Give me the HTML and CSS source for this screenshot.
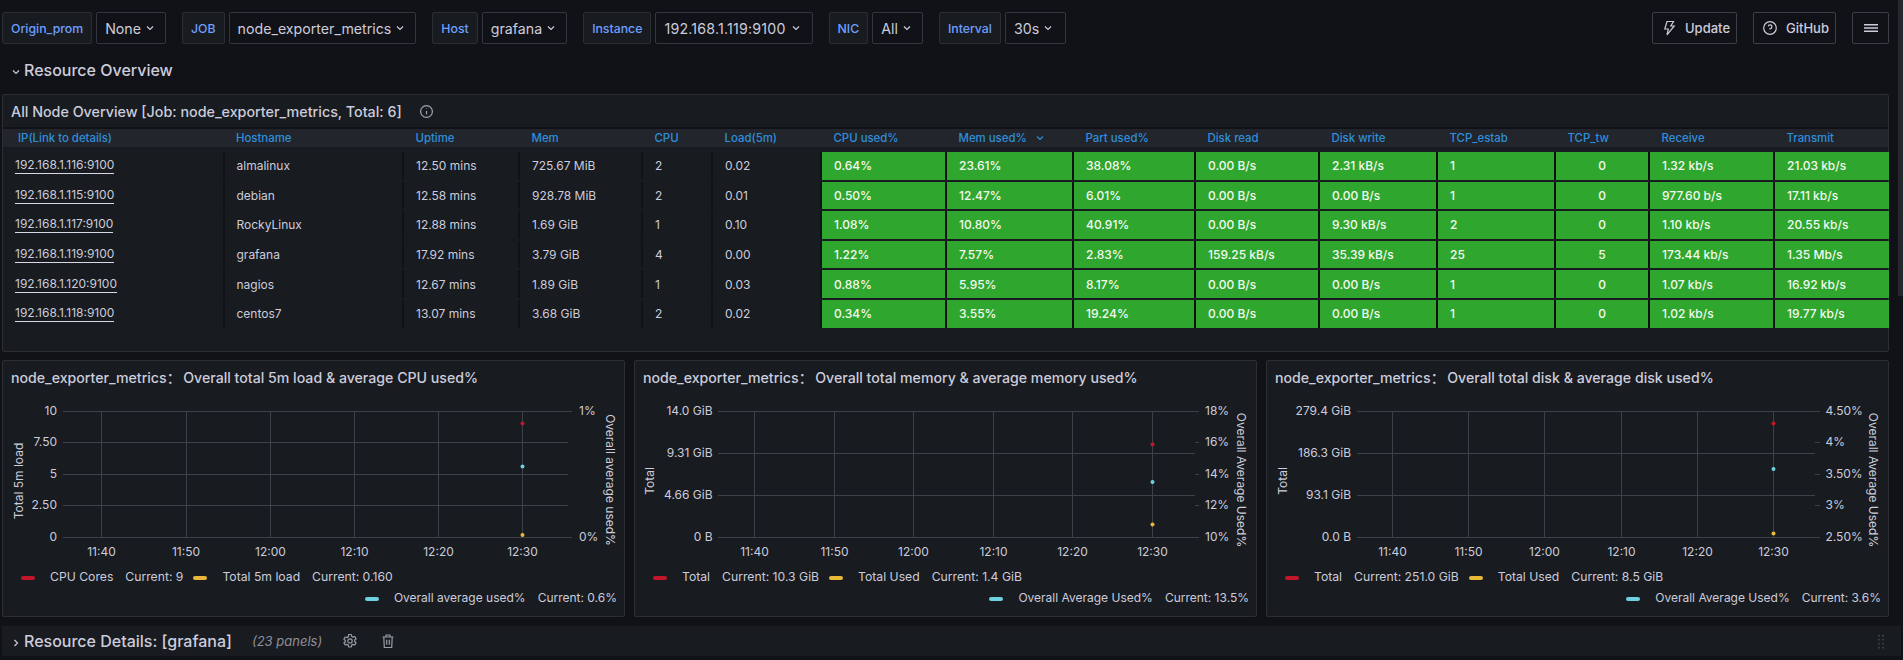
FILE: index.html
```html
<!DOCTYPE html>
<html lang="en">
<head>
<meta charset="utf-8">
<title>Node Exporter Dashboard</title>
<link rel="stylesheet" href="styles.css">
</head>
<body>
<div class="scroll-thumb"></div>
<main class="page">
  <header class="toolbar">
    <div class="var"><span class="var-label">Origin_prom</span><span class="var-select">None<svg class="chev" viewBox="0 0 8 6"><path d="M1 1.5l3 3 3-3"/></svg></span></div>
    <div class="var"><span class="var-label">JOB</span><span class="var-select">node_exporter_metrics<svg class="chev" viewBox="0 0 8 6"><path d="M1 1.5l3 3 3-3"/></svg></span></div>
    <div class="var"><span class="var-label">Host</span><span class="var-select">grafana<svg class="chev" viewBox="0 0 8 6"><path d="M1 1.5l3 3 3-3"/></svg></span></div>
    <div class="var"><span class="var-label">Instance</span><span class="var-select spaced">192.168.1.119:9100<svg class="chev" viewBox="0 0 8 6"><path d="M1 1.5l3 3 3-3"/></svg></span></div>
    <div class="var"><span class="var-label">NIC</span><span class="var-select">All<svg class="chev" viewBox="0 0 8 6"><path d="M1 1.5l3 3 3-3"/></svg></span></div>
    <div class="var"><span class="var-label">Interval</span><span class="var-select roomy">30s<svg class="chev" viewBox="0 0 8 6"><path d="M1 1.5l3 3 3-3"/></svg></span></div>
    <div class="actions">
      <span class="btn btn-update"><svg class="btn-icon" viewBox="0 0 16 16"><path d="M6 1.500h6.500L9.800 6h3.400L6 14.800 7.300 9H3.800z"/></svg>Update</span>
      <span class="btn btn-github"><svg class="btn-icon" viewBox="0 0 16 16"><circle cx="8" cy="8" r="6.300"/><path d="M6.200 6.300A1.900 1.900 0 1 1 8 8.600v.8"/><path d="M8 11.200v.4"/></svg>GitHub</span>
      <span class="btn btn-menu"><svg class="btn-icon wide" viewBox="0 0 16 16"><path d="M1 4.700h14M1 8h14M1 11.300h14"/></svg></span>
    </div>
  </header>

  <div class="section-head"><svg class="chev section-chev" viewBox="0 0 8 6"><path d="M1 1.500l3 3 3-3"/></svg><span>Resource Overview</span></div>

  <section class="panel table-panel">
    <div class="panel-title">All Node Overview [Job: node_exporter_metrics, Total: 6]<svg class="info" viewBox="0 0 16 16"><circle cx="8" cy="8" r="6.300"/><path d="M8 7.400v3.600"/><path d="M8 4.800v.5"/></svg></div>
    <div class="cols thead">
      <span>IP(Link to details)</span><span>Hostname</span><span>Uptime</span><span>Mem</span><span>CPU</span><span>Load(5m)</span><span>CPU used%</span><span>Mem used%<svg class="chev sort" viewBox="0 0 8 6"><path d="M1 1.500l3 3 3-3"/></svg></span><span>Part used%</span><span>Disk read</span><span>Disk write</span><span>TCP_estab</span><span>TCP_tw</span><span>Receive</span><span>Transmit</span>
    </div>
    <div class="tbody">
      <div class="cols trow"><span class="c"><a class="ip">192.168.1.116:9100</a></span><span class="c">almalinux</span><span class="c">12.50 mins</span><span class="c">725.67 MiB</span><span class="c">2</span><span class="c">0.02</span><span class="g">0.64%</span><span class="g">23.61%</span><span class="g">38.08%</span><span class="g">0.00 B/s</span><span class="g">2.31 kB/s</span><span class="g">1</span><span class="g ctr">0</span><span class="g">1.32 kb/s</span><span class="g">21.03 kb/s</span></div>
      <div class="cols trow"><span class="c"><a class="ip">192.168.1.115:9100</a></span><span class="c">debian</span><span class="c">12.58 mins</span><span class="c">928.78 MiB</span><span class="c">2</span><span class="c">0.01</span><span class="g">0.50%</span><span class="g">12.47%</span><span class="g">6.01%</span><span class="g">0.00 B/s</span><span class="g">0.00 B/s</span><span class="g">1</span><span class="g ctr">0</span><span class="g">977.60 b/s</span><span class="g">17.11 kb/s</span></div>
      <div class="cols trow"><span class="c"><a class="ip">192.168.1.117:9100</a></span><span class="c">RockyLinux</span><span class="c">12.88 mins</span><span class="c">1.69 GiB</span><span class="c">1</span><span class="c">0.10</span><span class="g">1.08%</span><span class="g">10.80%</span><span class="g">40.91%</span><span class="g">0.00 B/s</span><span class="g">9.30 kB/s</span><span class="g">2</span><span class="g ctr">0</span><span class="g">1.10 kb/s</span><span class="g">20.55 kb/s</span></div>
      <div class="cols trow"><span class="c"><a class="ip">192.168.1.119:9100</a></span><span class="c">grafana</span><span class="c">17.92 mins</span><span class="c">3.79 GiB</span><span class="c">4</span><span class="c">0.00</span><span class="g">1.22%</span><span class="g">7.57%</span><span class="g">2.83%</span><span class="g">159.25 kB/s</span><span class="g">35.39 kB/s</span><span class="g">25</span><span class="g ctr">5</span><span class="g">173.44 kb/s</span><span class="g">1.35 Mb/s</span></div>
      <div class="cols trow"><span class="c"><a class="ip">192.168.1.120:9100</a></span><span class="c">nagios</span><span class="c">12.67 mins</span><span class="c">1.89 GiB</span><span class="c">1</span><span class="c">0.03</span><span class="g">0.88%</span><span class="g">5.95%</span><span class="g">8.17%</span><span class="g">0.00 B/s</span><span class="g">0.00 B/s</span><span class="g">1</span><span class="g ctr">0</span><span class="g">1.07 kb/s</span><span class="g">16.92 kb/s</span></div>
      <div class="cols trow"><span class="c"><a class="ip">192.168.1.118:9100</a></span><span class="c">centos7</span><span class="c">13.07 mins</span><span class="c">3.68 GiB</span><span class="c">2</span><span class="c">0.02</span><span class="g">0.34%</span><span class="g">3.55%</span><span class="g">19.24%</span><span class="g">0.00 B/s</span><span class="g">0.00 B/s</span><span class="g">1</span><span class="g ctr">0</span><span class="g">1.02 kb/s</span><span class="g">19.77 kb/s</span></div>
    </div>
  </section>

  <div class="charts">
    <section class="panel chart-panel">
      <div class="panel-title chart-title">node_exporter_metrics：&#8201;Overall total 5m load &amp; average CPU used%</div>
      <svg class="chart" viewBox="3 395 621 171">
        <g class="grid">
          <path d="M63 411.500H572M63 442.500H568M63 474.500H568M63 505.500H568M63 537.500H572"/>
          <path d="M101.500 411V537M186.500 411V537M270.500 411V537M354.500 411V537M438.500 411V537M522.500 411V537"/>
        </g>
        <g class="axis end"><text x="57" y="415">10</text><text x="57" y="446">7.50</text><text x="57" y="478">5</text><text x="57" y="509">2.50</text><text x="57" y="541">0</text></g>
        <g class="axis"><text x="579" y="415">1%</text><text x="579" y="541">0%</text></g>
        <g class="axis mid"><text x="101.500" y="556">11:40</text><text x="186" y="556">11:50</text><text x="270.500" y="556">12:00</text><text x="354.500" y="556">12:10</text><text x="438.500" y="556">12:20</text><text x="522.500" y="556">12:30</text></g>
        <text class="axis-title" transform="translate(23 481) rotate(-90)">Total 5m load</text>
        <text class="axis-title" transform="translate(606 480) rotate(90)">Overall average used%</text>
        <circle class="red" cx="522.500" cy="423.500" r="2"/><circle class="cyan" cx="522.500" cy="466.500" r="2"/><circle class="yellow" cx="522.500" cy="535" r="2"/>
      </svg>
      <div class="legend">
        <div class="legend-row">
          <span class="lg"><i class="sw sw-red"></i><span>CPU Cores</span><span>Current: 9</span></span>
          <span class="lg"><i class="sw sw-yellow"></i><span>Total 5m load</span><span>Current: 0.160</span></span>
        </div>
        <div class="legend-row right">
          <span class="lg"><i class="sw sw-cyan"></i><span>Overall average used%</span><span>Current: 0.6%</span></span>
        </div>
      </div>
    </section>

    <section class="panel chart-panel">
      <div class="panel-title chart-title">node_exporter_metrics：&#8201;Overall total memory &amp; average memory used%</div>
      <svg class="chart" viewBox="635 395 621 171">
        <g class="grid">
          <path d="M718 411.500H1199M718 453.500H1195M718 495.500H1195M718 537.500H1199M1195 442.500H1199M1195 474.500H1199M1195 505.500H1199"/>
          <path d="M754.500 411V537M834.500 411V537M913.500 411V537M993.500 411V537M1072.500 411V537M1152.500 411V537"/>
        </g>
        <g class="axis end"><text x="712.500" y="415">14.0 GiB</text><text x="712.500" y="457">9.31 GiB</text><text x="712.500" y="499">4.66 GiB</text><text x="712.500" y="541">0 B</text></g>
        <g class="axis"><text x="1205" y="415">18%</text><text x="1205" y="446">16%</text><text x="1205" y="478">14%</text><text x="1205" y="509">12%</text><text x="1205" y="541">10%</text></g>
        <g class="axis mid"><text x="754.500" y="556">11:40</text><text x="834.500" y="556">11:50</text><text x="913.500" y="556">12:00</text><text x="993.500" y="556">12:10</text><text x="1072.500" y="556">12:20</text><text x="1152.500" y="556">12:30</text></g>
        <text class="axis-title" transform="translate(654 481) rotate(-90)">Total</text>
        <text class="axis-title" transform="translate(1237 480) rotate(90)">Overall Average Used%</text>
        <circle class="red" cx="1152.500" cy="444.500" r="2"/><circle class="cyan" cx="1152.500" cy="482" r="2"/><circle class="yellow" cx="1152.500" cy="524.500" r="2"/>
      </svg>
      <div class="legend">
        <div class="legend-row">
          <span class="lg"><i class="sw sw-red"></i><span>Total</span><span>Current: 10.3 GiB</span></span>
          <span class="lg"><i class="sw sw-yellow"></i><span>Total Used</span><span>Current: 1.4 GiB</span></span>
        </div>
        <div class="legend-row right">
          <span class="lg"><i class="sw sw-cyan"></i><span>Overall Average Used%</span><span>Current: 13.5%</span></span>
        </div>
      </div>
    </section>

    <section class="panel chart-panel">
      <div class="panel-title chart-title">node_exporter_metrics：&#8201;Overall total disk &amp; average disk used%</div>
      <svg class="chart" viewBox="1267 395 621 171">
        <g class="grid">
          <path d="M1357 411.500H1820M1357 453.500H1815M1357 495.500H1815M1357 537.500H1820M1815 442.500H1820M1815 474.500H1820M1815 505.500H1820"/>
          <path d="M1392.500 411V537M1468.500 411V537M1544.500 411V537M1621.500 411V537M1697.500 411V537M1773.500 411V537"/>
        </g>
        <g class="axis end"><text x="1351" y="415">279.4 GiB</text><text x="1351" y="457">186.3 GiB</text><text x="1351" y="499">93.1 GiB</text><text x="1351" y="541">0.0 B</text></g>
        <g class="axis"><text x="1825.500" y="415">4.50%</text><text x="1825.500" y="446">4%</text><text x="1825.500" y="478">3.50%</text><text x="1825.500" y="509">3%</text><text x="1825.500" y="541">2.50%</text></g>
        <g class="axis mid"><text x="1392.500" y="556">11:40</text><text x="1468.500" y="556">11:50</text><text x="1544.500" y="556">12:00</text><text x="1621.500" y="556">12:10</text><text x="1697.500" y="556">12:20</text><text x="1773.500" y="556">12:30</text></g>
        <text class="axis-title" transform="translate(1287 481) rotate(-90)">Total</text>
        <text class="axis-title" transform="translate(1869 480) rotate(90)">Overall Average Used%</text>
        <circle class="red" cx="1773.500" cy="423.500" r="2"/><circle class="cyan" cx="1773.500" cy="469" r="2"/><circle class="yellow" cx="1773.500" cy="533.500" r="2"/>
      </svg>
      <div class="legend">
        <div class="legend-row">
          <span class="lg"><i class="sw sw-red"></i><span>Total</span><span>Current: 251.0 GiB</span></span>
          <span class="lg"><i class="sw sw-yellow"></i><span>Total Used</span><span>Current: 8.5 GiB</span></span>
        </div>
        <div class="legend-row right">
          <span class="lg"><i class="sw sw-cyan"></i><span>Overall Average Used%</span><span>Current: 3.6%</span></span>
        </div>
      </div>
    </section>
  </div>

  <div class="row-bar">
    <svg class="chev-right" viewBox="0 0 6 8"><path d="M1.500 1l3 3-3 3"/></svg>
    <span class="row-title">Resource Details: [grafana]</span>
    <em class="row-count">(23 panels)</em>
    <svg class="row-icon gear" viewBox="0 0 16 16"><circle cx="8" cy="8" r="2.200"/><path d="M6.700 1.500h2.600l.4 1.900 1.300.7 1.800-.6 1.300 2.200-1.400 1.300v1.500l1.400 1.300-1.300 2.200-1.800-.6-1.300.7-.4 1.900H6.700l-.4-1.900-1.300-.7-1.800.6-1.300-2.200L3.300 9V7.500L1.900 6.200l1.300-2.200 1.800.6 1.300-.7z"/></svg>
    <svg class="row-icon trash" viewBox="0 0 16 16"><path d="M2.500 4h11M6 4V2h4v2M3.800 4l.5 10.500h7.400l.5-10.500M6.700 6.800v5M9.300 6.800v5"/></svg>
    <svg class="grip" viewBox="0 0 8 20"><path d="M0 1h2.500v2.500H0zM5.500 1H8v2.500H5.500zM0 6.300h2.500v2.500H0zM5.500 6.300H8v2.500H5.500zM0 11.600h2.500v2.500H0zM5.500 11.600H8v2.500H5.500zM0 16.900h2.500v2.500H0zM5.500 16.900H8v2.500H5.500z"/></svg>
  </div>
</main>
</body>
</html>
```

FILE: styles.css
```css
* { box-sizing: border-box; }
html, body { margin: 0; height: 660px; overflow: hidden; }
body {
  background: #111217;
  color: #ccccdc;
  font-family: Inter, "Noto Sans CJK SC", "Noto Sans", sans-serif;
  font-size: 12px;
}
.scroll-thumb {
  position: absolute;
  top: 0;
  right: 0;
  width: 5px;
  height: 296px;
  background: #26282d;
}
.page { width: 1889px; padding: 12px 0 0 2px; }

/* toolbar */
.toolbar { display: flex; gap: 16px; height: 32px; }
.var { display: flex; gap: 4px; }
.var-label {
  display: flex;
  align-items: center;
  height: 32px;
  padding: 0 8px;
  background: #181b1f;
  border: 1px solid #2b2e33;
  border-radius: 2px;
  color: #6e9fff;
  font-size: 12.3px;
  font-weight: 500;
}
.var-select {
  display: flex;
  align-items: center;
  gap: 5px;
  height: 32px;
  padding: 0 11px 0 8px;
  border: 1px solid #33363c;
  border-radius: 2px;
  background: #111217;
  color: #ccccdc;
  font-size: 14.2px;
}
.var-select.spaced { letter-spacing: .2px; gap: 6px; padding-right: 12px; }
.var-select.roomy { padding-right: 13px; }
.chev { width: 8px; height: 6px; flex: none; fill: none; stroke: #ccccdc; stroke-width: 1.2; }
.actions { display: flex; gap: 16px; margin-left: auto; }
.btn {
  display: flex;
  align-items: center;
  gap: 8px;
  height: 32px;
  padding: 0 0 0 8px;
  border: 1px solid #3c3f45;
  border-radius: 2px;
  color: #ccccdc;
  font-weight: 500;
  font-size: 13px;
}
.btn-update { width: 85px; }
.btn-github { width: 83px; }
.btn-menu { width: 37px; justify-content: center; padding: 0; }
.btn-icon { width: 16px; height: 16px; fill: none; stroke: #ccccdc; stroke-width: 1.2; flex: none; }
.btn-icon.wide { stroke-width: 1.5; }

/* section */
.section-head {
  display: flex;
  align-items: center;
  height: 50px;
  gap: 4px;
  padding: 2px 0 0 10px;
  font-size: 16px;
  font-weight: 500;
}
.section-chev { width: 8px; height: 6px; margin-top: 3px; }

/* panels */
.panel {
  background: #181b1f;
  border: 1px solid #2b2e33;
  border-radius: 2px;
}
.panel-title {
  display: flex;
  align-items: center;
  height: 32px;
  padding-left: 8px;
  font-size: 14.3px;
  font-weight: 500;
  color: #ccccdc;
}
.info { width: 15px; height: 15px; margin-left: 17px; fill: none; stroke: #a0a2ad; stroke-width: 1.3; }

/* table */
.table-panel { height: 258px; }
.cols {
  display: grid;
  grid-template-columns: 219.5px 177.5px 114px 121px 68px 107px 123px 125px 120px 122px 116px 116px 92px 123px 113.5px;
  column-gap: 2px;
}
.thead {
  height: 20px;
  align-items: center;
  background: #22252b;
  border-top: 2px solid #111217;
  color: #2e8fdc;
  font-size: 11.4px;
  font-weight: 500;
}
.thead > span { padding-left: 11.5px; display: flex; align-items: center; }
.thead > span:first-child { padding-left: 15px; }
.sort { margin-left: 9px; stroke: #2e8fdc; }
.tbody {
  display: flex;
  flex-direction: column;
  gap: 2px;
  margin-top: 5px;
}
.trow { height: 27.6px; background: #111217; }
.trow > span {
  display: flex;
  align-items: center;
  padding-left: 12px;
  font-size: 12px;
}
.trow > .c { background: #181b1f; }
.trow > .g { background: #2fa72e; color: #f4f9f0; font-weight: 500; }
.trow > .ctr { justify-content: center; padding-left: 0; }
.ip { color: #ccccdc; border-bottom: 1px solid #d8d9e6; padding-bottom: 1px; }

/* charts */
.charts { display: flex; gap: 9px; margin-top: 8px; }
.chart-panel { width: 623px; height: 257px; }
.chart-title { height: 34px; padding-bottom: 2px; font-size: 14.15px; }
.chart { display: block; width: 621px; height: 171px; }
.grid path { stroke: #3e4147; stroke-width: 1; fill: none; }
.axis text { fill: #ccccdc; font-size: 12px; font-family: Inter, sans-serif; }
.axis.end text { text-anchor: end; }
.axis.mid text { text-anchor: middle; }
.axis-title { fill: #ccccdc; font-size: 12px; text-anchor: middle; font-family: Inter, sans-serif; }
.red { fill: #c4162a; }
.cyan { fill: #6ed0e0; }
.yellow { fill: #eab839; }

.legend { padding: 0 7px 0 18px; font-size: 12.2px; }
.legend-row { display: flex; align-items: center; height: 21px; gap: 10px; }
.legend-row.right { justify-content: flex-end; font-size: 12px; }
.lg { display: flex; align-items: center; gap: 12px; }
.sw { width: 14px; height: 4px; border-radius: 2px; margin-right: 3px; margin-top: 2px; }
.sw-red { background: #c4162a; }
.sw-yellow { background: #eab839; }
.sw-cyan { background: #6ed0e0; }

/* row */
.row-bar {
  display: flex;
  align-items: center;
  width: 1899px;
  height: 30px;
  margin-top: 9px;
  padding-left: 11px;
  background: #181b1f;
}
.chev-right { width: 6px; height: 8px; margin-top: 3px; fill: none; stroke: #ccccdc; stroke-width: 1.2; }
.row-title { margin-left: 5px; font-size: 16px; font-weight: 500; color: #ccccdc; }
.row-count { margin-left: 20px; font-size: 13px; color: #8e8f99; }
.row-icon { width: 16px; height: 16px; fill: none; stroke: #9a9ca6; stroke-width: 1.2; stroke-linejoin: round; flex: none; }
.gear { margin-left: 20px; }
.trash { margin-left: 22px; }
.grip { width: 6px; height: 19px; margin-left: auto; margin-right: 17px; fill: #3b3e44; }
```
